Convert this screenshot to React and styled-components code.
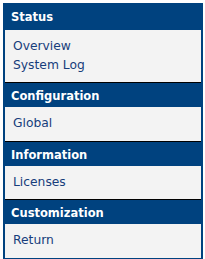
import React from "react";
import styled, { createGlobalStyle } from "styled-components";

const GlobalStyle = createGlobalStyle`
  body {
    margin: 0;
    background: #ffffff;
    font-family: "DejaVu Sans", Verdana, sans-serif;
  }
`;

const Menu = styled.nav`
  margin: 3px;
  width: 200px;
  box-sizing: border-box;
  background: #00427f;
  padding: 0 2px 2px 2px;
`;

const SectionTitle = styled.div`
  padding: ${(p) => (p.$first ? "3px 6px 2px" : "2px 6px 0")};
  line-height: 22px;
  font-size: 11.5px;
  font-weight: bold;
  color: #ffffff;
`;

const Panel = styled.ul`
  list-style: none;
  margin: 0;
  padding: 7px 8px 8px;
  background: #f3f3f3;
  border-bottom: ${(p) => (p.$last ? "none" : "1px solid #000000")};
`;

const Item = styled.li`
  line-height: 18.5px;
  font-size: 12.3px;
`;

const Link = styled.a`
  color: #173d7b;
  text-decoration: none;
`;

const sections = [
  { title: "Status", items: ["Overview", "System Log"] },
  { title: "Configuration", items: ["Global"] },
  { title: "Information", items: ["Licenses"] },
  { title: "Customization", items: ["Return"] },
];

export default function App() {
  return (
    <>
      <GlobalStyle />
      <Menu>
        {sections.map((s, i) => (
          <React.Fragment key={s.title}>
            <SectionTitle $first={i === 0}>{s.title}</SectionTitle>
            <Panel $last={i === sections.length - 1}>
              {s.items.map((it) => (
                <Item key={it}>
                  <Link href="#">{it}</Link>
                </Item>
              ))}
            </Panel>
          </React.Fragment>
        ))}
      </Menu>
    </>
  );
}
